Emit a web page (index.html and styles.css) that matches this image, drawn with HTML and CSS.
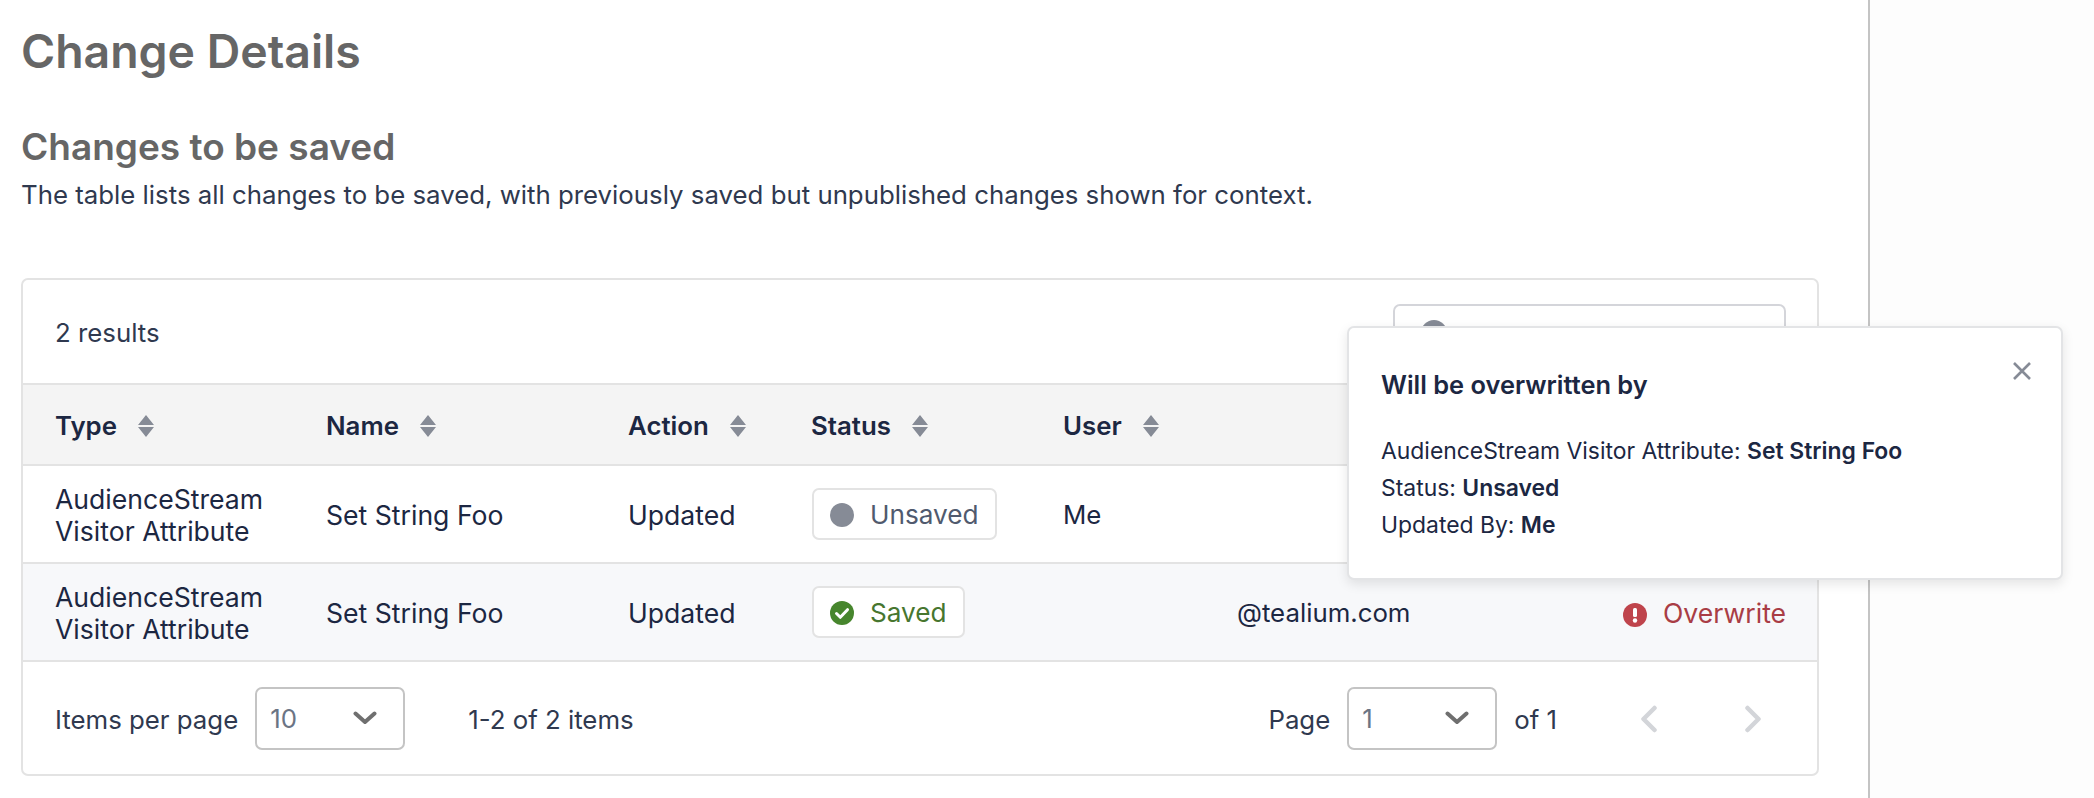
FILE: index.html
```html
<!DOCTYPE html>
<html lang="en">
<head>
<meta charset="utf-8">
<title>Change Details</title>
<link rel="stylesheet" href="styles.css">
</head>
<body>
<div class="page">
  <main class="main">
    <h1 class="title">Change Details</h1>
    <h2 class="subtitle">Changes to be saved</h2>
    <p class="lead">The table lists all changes to be saved, with previously saved but unpublished changes shown for context.</p>
    <section class="card">
      <div class="toolbar">
        <span class="results">2 results</span>
        <div class="search">
          <svg class="search-icon" viewBox="0 0 26 26" width="26" height="26"><circle cx="13" cy="13" r="13" fill="#868b96"/><circle cx="13" cy="14" r="8" fill="#fff"/></svg>
        </div>
      </div>
      <table class="grid">
        <colgroup>
          <col class="c-type"><col class="c-name"><col class="c-action"><col class="c-status"><col class="c-user"><col class="c-email"><col class="c-over">
        </colgroup>
        <thead>
          <tr>
            <th><span class="th">Type <svg class="sort" viewBox="0 0 16 22" width="16" height="22"><path d="M8 0l8 10H0zM8 22L0 12h16z"/></svg></span></th>
            <th><span class="th">Name <svg class="sort" viewBox="0 0 16 22" width="16" height="22"><path d="M8 0l8 10H0zM8 22L0 12h16z"/></svg></span></th>
            <th><span class="th">Action <svg class="sort" viewBox="0 0 16 22" width="16" height="22"><path d="M8 0l8 10H0zM8 22L0 12h16z"/></svg></span></th>
            <th><span class="th">Status <svg class="sort" viewBox="0 0 16 22" width="16" height="22"><path d="M8 0l8 10H0zM8 22L0 12h16z"/></svg></span></th>
            <th><span class="th">User <svg class="sort" viewBox="0 0 16 22" width="16" height="22"><path d="M8 0l8 10H0zM8 22L0 12h16z"/></svg></span></th>
            <th></th>
            <th></th>
          </tr>
        </thead>
        <tbody>
          <tr>
            <td>AudienceStream<br>Visitor Attribute</td>
            <td>Set String Foo</td>
            <td>Updated</td>
            <td class="status"><span class="badge badge-muted"><span class="dot"></span>Unsaved</span></td>
            <td class="plain">Me</td>
            <td></td>
            <td></td>
          </tr>
          <tr class="alt">
            <td>AudienceStream<br>Visitor Attribute</td>
            <td>Set String Foo</td>
            <td>Updated</td>
            <td class="status"><span class="badge badge-ok"><svg class="ico" viewBox="0 0 24 24" width="24" height="24"><circle cx="12" cy="12" r="12" fill="#47862d"/><path d="M6.5 12.5l3.8 3.8 7.2-7.6" fill="none" stroke="#fff" stroke-width="3" stroke-linecap="round" stroke-linejoin="round"/></svg>Saved</span></td>
            <td></td>
            <td class="plain">@tealium.com</td>
            <td class="over"><svg class="ico" viewBox="0 0 24 24" width="24" height="24"><circle cx="12" cy="12" r="12" fill="#bf444c"/><rect x="10" y="5" width="4" height="9" rx="1.5" fill="#fff"/><circle cx="12" cy="17.5" r="2.2" fill="#fff"/></svg>Overwrite</td>
          </tr>
        </tbody>
      </table>
      <div class="pager">
        <div class="pager-left">
          <span>Items per page</span>
          <span class="select"><span>10</span><svg viewBox="0 0 24 14" width="24" height="14"><path d="M2.5 2.5l9.5 8.5 9.5-8.5" fill="none" stroke="#6f6f6f" stroke-width="4" stroke-linecap="round" stroke-linejoin="round"/></svg></span>
          <span class="count">1-2 of 2 items</span>
        </div>
        <div class="pager-right">
          <span>Page</span>
          <span class="select"><span>1</span><svg viewBox="0 0 24 14" width="24" height="14"><path d="M2.5 2.5l9.5 8.5 9.5-8.5" fill="none" stroke="#6f6f6f" stroke-width="4" stroke-linecap="round" stroke-linejoin="round"/></svg></span>
          <span class="of">of 1</span>
          <svg class="nav nav-prev" viewBox="0 0 18 28" width="18" height="28"><path d="M14.5 3L3.5 14l11 11" fill="none" stroke="#d3d5d9" stroke-width="4.5" stroke-linecap="round" stroke-linejoin="round"/></svg>
          <svg class="nav nav-next" viewBox="0 0 18 28" width="18" height="28"><path d="M3.5 3l11 11-11 11" fill="none" stroke="#d3d5d9" stroke-width="4.5" stroke-linecap="round" stroke-linejoin="round"/></svg>
        </div>
      </div>
    </section>
  </main>
  <aside class="rail"></aside>
  <div class="popover">
    <svg class="close" viewBox="0 0 20 20" width="20" height="20"><path d="M2 2l16 16M18 2L2 18" fill="none" stroke="#868b96" stroke-width="2.6"/></svg>
    <h3 class="pop-title">Will be overwritten by</h3>
    <p class="pop-line">AudienceStream Visitor Attribute: <b>Set String Foo</b></p>
    <p class="pop-line">Status: <b>Unsaved</b></p>
    <p class="pop-line">Updated By: <b>Me</b></p>
  </div>
</div>
</body>
</html>
```

FILE: styles.css
```css
* { box-sizing: border-box; }
html, body { margin: 0; height: 100%; }
body {
  font-family: "Inter", "Liberation Sans", sans-serif;
  font-size: 25.8px;
  color: #1c2742;
  background: #fff;
  overflow: hidden;
}
.page { position: relative; display: flex; height: 798px; }
.main {
  width: 1870px;
  flex: none;
  padding: 21px 49px 0 21px;
  border-right: 2px solid #c4c4c4;
}
.rail { flex: 1; background: #fdfdfd; }
.title {
  margin: 0;
  font-size: 46.4px;
  line-height: 60px;
  font-weight: 600;
  color: #666;
}
.subtitle {
  margin: 43px 0 0;
  font-size: 37px;
  line-height: 46px;
  font-weight: 600;
  color: #666;
}
.lead {
  margin: 8px 0 0;
  line-height: 34px;
  color: #2f394f;
}
.card {
  margin-top: 66px;
  height: 498px;
  border: 2px solid #e3e3e3;
  border-radius: 7px;
  background: #fff;
  overflow: hidden;
}
.toolbar {
  display: flex;
  align-items: flex-start;
  justify-content: space-between;
  height: 103px;
  padding: 0 31px 0 32px;
  color: #2f394f;
}
.results { margin-top: 25px; line-height: 56px; }
.search {
  position: relative;
  width: 393px;
  height: 62px;
  margin-top: 24px;
  border: 2px solid #d4d5da;
  border-radius: 7px;
}
.search-icon { position: absolute; left: 26px; top: 14px; }
.grid { width: 100%; border-collapse: collapse; table-layout: fixed; }
.c-type { width: 271px; }
.c-name { width: 302px; }
.c-action { width: 183px; }
.c-status { width: 252px; }
.c-user { width: 174px; }
.c-email { width: 386px; }
.grid th {
  height: 81px;
  text-align: left;
  background: #f4f4f4;
  border-top: 2px solid #e3e3e3;
  border-bottom: 2px solid #e3e3e3;
  padding: 2px 0 0 32px;
  font-weight: 600;
}
.th { display: inline-flex; align-items: center; gap: 21px; }
.sort { fill: #868b96; }
.grid td {
  height: 98px;
  padding: 2px 0 0 32px;
  font-size: 26.6px;
  line-height: 32px;
  border-bottom: 2px solid #e3e3e3;
}
.grid td.status { padding-top: 0; }
.grid td.plain { font-size: 25.8px; }
.alt td { background: #f7f8fa; }
.badge {
  display: inline-flex;
  align-items: center;
  gap: 16px;
  height: 52px;
  margin-left: 1px;
  padding: 2px 16px 0 16px;
  font-size: 26.2px;
  background: #fff;
  border: 2px solid #e3e3e3;
  border-radius: 7px;
}
.badge-muted { color: #505a6e; }
.badge-ok { color: #47762f; }
.dot { width: 24px; height: 24px; border-radius: 50%; background: #868b96; }
.ico { flex: none; }
.over { color: #a93d45; white-space: nowrap; }
.over .ico { vertical-align: -4px; margin-right: 16px; }
.pager {
  display: flex;
  align-items: center;
  justify-content: space-between;
  height: 114px;
  padding: 0 0 0 32px;
  color: #2f394f;
}
.pager-left, .pager-right { display: flex; align-items: center; }
.select {
  display: inline-flex;
  align-items: center;
  justify-content: space-between;
  width: 150px;
  height: 63px;
  margin: 0 0 2px 17px;
  padding: 0 26px 0 13px;
  border: 2px solid #c4c4c4;
  border-radius: 7px;
  color: #6b7484;
}
.count { margin-left: 63px; }
.of { margin-left: 17px; }
.nav-prev { margin-left: 83px; }
.nav-next { margin-left: 86px; margin-right: 55px; }
.popover {
  position: absolute;
  left: 1347px;
  top: 326px;
  width: 716px;
  height: 254px;
  padding: 0 32px;
  background: #fff;
  border: 2px solid #e3e4e6;
  border-radius: 7px;
  box-shadow: 0 4px 12px rgba(0, 0, 0, .1);
}
.close { position: absolute; right: 29px; top: 33px; }
.pop-title {
  margin: 39px 0 30px;
  font-size: 25.4px;
  line-height: 36px;
  font-weight: 600;
}
.pop-line { margin: 0; font-size: 22.9px; line-height: 37px; color: #1c2742; }
.pop-line b { font-weight: 600; }
```
